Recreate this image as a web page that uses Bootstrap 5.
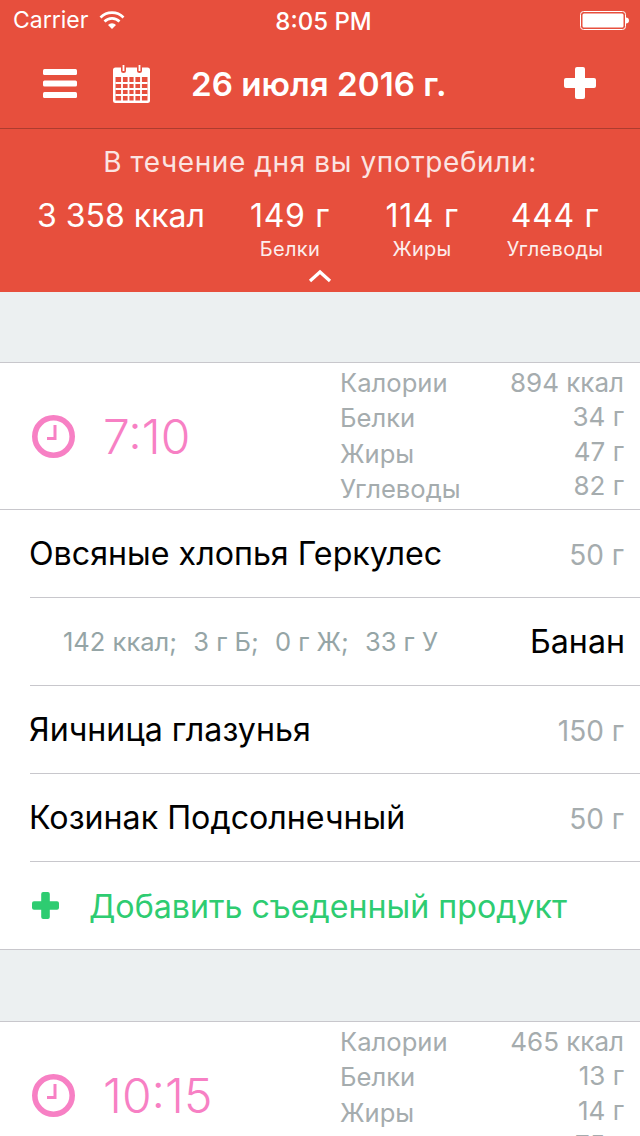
<!DOCTYPE html>
<html lang="ru">
<head>
  <meta charset="UTF-8" />
  <title>Дневник питания</title>
  <link href="https://cdn.jsdelivr.net/npm/bootstrap@5.3.3/dist/css/bootstrap.min.css" rel="stylesheet" />
  <style>
    html, body { height: 1136px; overflow: hidden; }
    body { width: 640px; background: #ecf0f1; font-family: Inter, "Noto Sans", sans-serif; color: #000; }
    .top-red { background: #e74f3d; color: #fff; }
    .status-bar { height: 40px; padding: 0 11px 0 13px; font-size: 23px; position: relative; }
    .status-wifi { margin-left: 11px; }
    .status-time { position: absolute; left: 7px; right: 0; top: 8px; text-align: center; font-weight: 500; font-size: 24px; line-height: 28px; }
    .nav-strip { height: 89px; border-bottom: 1px solid #ad3c2f; padding: 0 44px 1px 43px; }
    .nav-cal { margin-left: 36px; }
    .nav-date { font-size: 33.200px; font-weight: 600; margin: 3px 0 0 41px; }
    .nav-add { margin-top: -2px; }
    .summary { height: 163px; padding-top: 18px; position: relative; }
    .summary-title { font-size: 28px; letter-spacing: .6px; line-height: 30px; text-align: center; opacity: .85; }
    .macro { position: absolute; top: 67px; text-align: center; transform: translateX(-50%); white-space: nowrap; }
    .macro-val { font-size: 32px; letter-spacing: .7px; line-height: 40px; font-weight: 400; }
    .macro-total { letter-spacing: 0; }
    .macro-cap { font-size: 20px; letter-spacing: .3px; line-height: 28px; margin-top: -1px; opacity: .9; }
    .chevron { position: absolute; left: 308px; top: 140px; }
    .meal { background: #fff; border-top: 1px solid #c8c7cc; border-bottom: 1px solid #c8c7cc; }
    .meal-head { height: 147px; border-bottom: 1px solid #c8c7cc; padding-left: 32px; }
    .meal-time { font-size: 48px; font-weight: 300; color: #f780c4; margin: 2px 0 0 28px; line-height: 1; }
    .nutri { position: absolute; left: 340px; right: 16px; top: 2px; color: #a5acae; }
    .nutri-labels { font-size: 25.600px; }
    .nutri-labels div { height: 35.300px; line-height: 35px; }
    .nutri-values { font-size: 26px; text-align: right; }
    .nutri-values div { height: 34.300px; line-height: 35px; }
    .meal-row { height: 88px; margin-left: 30px; border-bottom: 1px solid #c8c7cc; padding: 2px 16px 0 0; font-size: 32.200px; }
    .meal-row .dish { margin-left: -1px; }
    .meal-row .amount { font-size: 28px; color: #a5acae; }
    .meal-row .dish-right { margin-right: -1px; }
    .swiped { font-size: 25.500px; color: #95a5a6; margin-left: 33px; }
    .swiped span { margin-right: 16.300px; }
    .add-row { height: 87px; padding-left: 32px; color: #2ecc71; font-size: 32.200px; }
    .add-row svg { margin-right: 30px; }
    .add-label { margin-top: 4px; }
    .spacer { height: 70px; }
    .spacer-wide { height: 71px; }
  </style>
</head>
<body>
  <div class="top-red">
    <div class="status-bar d-flex align-items-center">
      <span>Carrier</span>
      <svg class="status-wifi" width="26" height="20" viewBox="0 0 26 20" fill="none" stroke="#fff" stroke-width="2.6">
        <path d="M1.500 7.500a16 16 0 0 1 23 0"/>
        <path d="M5.500 11.500a10.500 10.500 0 0 1 15 0"/>
        <path d="M13 19l-4-4a5.500 5.500 0 0 1 8 0z" fill="#fff" stroke="none"/>
      </svg>
      <span class="status-time">8:05 PM</span>
      <svg class="ms-auto" width="50" height="20" viewBox="0 0 50 20">
        <rect x="1.500" y="1.500" width="45" height="18" rx="3" fill="none" stroke="#fff"/>
        <rect x="3.500" y="3.500" width="41" height="14" rx="1.500" fill="#fff"/>
        <path d="M47 7.500c1.800 0 3 1 3 3s-1.200 3-3 3z" fill="#fff"/>
      </svg>
    </div>
    <div class="nav-strip d-flex align-items-center">
      <svg width="34" height="29" viewBox="0 0 34 29" fill="#fff">
        <rect y="0" width="34" height="6" rx="1.500"/>
        <rect y="11.500" width="34" height="6" rx="1.500"/>
        <rect y="23" width="34" height="6" rx="1.500"/>
      </svg>
      <svg class="nav-cal" width="37" height="39" viewBox="0 0 37 39">
        <path fill="#fff" fill-rule="evenodd" d="M2.500 3.500H8v3a2.500 2.500 0 0 0 5 0v-3h11v3a2.500 2.500 0 0 0 5 0v-3h5.500a2.500 2.500 0 0 1 2.500 2.500v30.500a2.500 2.500 0 0 1-2.500 2.500h-32A2.500 2.500 0 0 1 0 36.500V6a2.500 2.500 0 0 1 2.500-2.500zM2.500 13v23.500h32V13z"/>
        <path fill="none" stroke="#fff" stroke-width="1.800" d="M10.500 1v6M26.500 1v6M2.500 19h32M2.500 25h32M2.500 31h32M9 13v24M15.500 13v24M21.500 13v24M28 13v24"/>
      </svg>
      <span class="nav-date">26 июля 2016 г.</span>
      <svg class="ms-auto nav-add" width="32" height="32" viewBox="0 0 32 32" fill="#fff">
        <rect x="11" y="0" width="10" height="32" rx="2"/>
        <rect x="0" y="11" width="32" height="10" rx="2"/>
      </svg>
    </div>
    <div class="summary">
      <div class="summary-title">В течение дня вы употребили:</div>
      <div class="macro" style="left:121px"><div class="macro-val macro-total">3 358 ккал</div></div>
      <div class="macro" style="left:290px"><div class="macro-val">149 г</div><div class="macro-cap">Белки</div></div>
      <div class="macro" style="left:422px"><div class="macro-val">114 г</div><div class="macro-cap">Жиры</div></div>
      <div class="macro" style="left:555px"><div class="macro-val">444 г</div><div class="macro-cap">Углеводы</div></div>
      <svg class="chevron" width="24" height="14" viewBox="0 0 24 14" fill="none" stroke="#fff" stroke-width="3.200"><path d="M2 12L12 3l10 9"/></svg>
    </div>
  </div>

  <div class="spacer"></div>

  <div class="meal">
    <div class="meal-head d-flex align-items-center position-relative">
      <svg width="43" height="43" viewBox="0 0 43 43" fill="none" stroke="#f780c4">
        <circle cx="21.500" cy="21.500" r="18.700" stroke-width="5.600"/>
        <path d="M23 10v13.500H15" stroke-width="3"/>
      </svg>
      <span class="meal-time">7:10</span>
      <div class="nutri d-flex justify-content-between">
        <div class="nutri-labels"><div>Калории</div><div>Белки</div><div>Жиры</div><div>Углеводы</div></div>
        <div class="nutri-values"><div>894 ккал</div><div>34 г</div><div>47 г</div><div>82 г</div></div>
      </div>
    </div>
    <div class="meal-row d-flex align-items-center justify-content-between"><span class="dish">Овсяные хлопья Геркулес</span><span class="amount">50 г</span></div>
    <div class="meal-row d-flex align-items-center justify-content-between"><span class="swiped"><span>142 ккал;</span><span>3 г Б;</span><span>0 г Ж;</span>33 г У</span><span class="dish-right">Банан</span></div>
    <div class="meal-row d-flex align-items-center justify-content-between"><span class="dish">Яичница глазунья</span><span class="amount">150 г</span></div>
    <div class="meal-row d-flex align-items-center justify-content-between"><span class="dish">Козинак Подсолнечный</span><span class="amount">50 г</span></div>
    <div class="add-row d-flex align-items-center">
      <svg width="27" height="27" viewBox="0 0 27 27" fill="#2ecc71">
        <rect x="9.200" y="0" width="8.600" height="27" rx="2"/>
        <rect x="0" y="9.200" width="27" height="8.600" rx="2"/>
      </svg>
      <span class="add-label">Добавить съеденный продукт</span>
    </div>
  </div>

  <div class="spacer-wide"></div>

  <div class="meal">
    <div class="meal-head d-flex align-items-center position-relative">
      <svg width="43" height="43" viewBox="0 0 43 43" fill="none" stroke="#f780c4">
        <circle cx="21.500" cy="21.500" r="18.700" stroke-width="5.600"/>
        <path d="M23 10v13.500H15" stroke-width="3"/>
      </svg>
      <span class="meal-time">10:15</span>
      <div class="nutri d-flex justify-content-between">
        <div class="nutri-labels"><div>Калории</div><div>Белки</div><div>Жиры</div><div>Углеводы</div></div>
        <div class="nutri-values"><div>465 ккал</div><div>13 г</div><div>14 г</div><div>75 г</div></div>
      </div>
    </div>
  </div>
  <script src="https://cdn.jsdelivr.net/npm/bootstrap@5.3.3/dist/js/bootstrap.bundle.min.js"></script>
</body>
</html>
